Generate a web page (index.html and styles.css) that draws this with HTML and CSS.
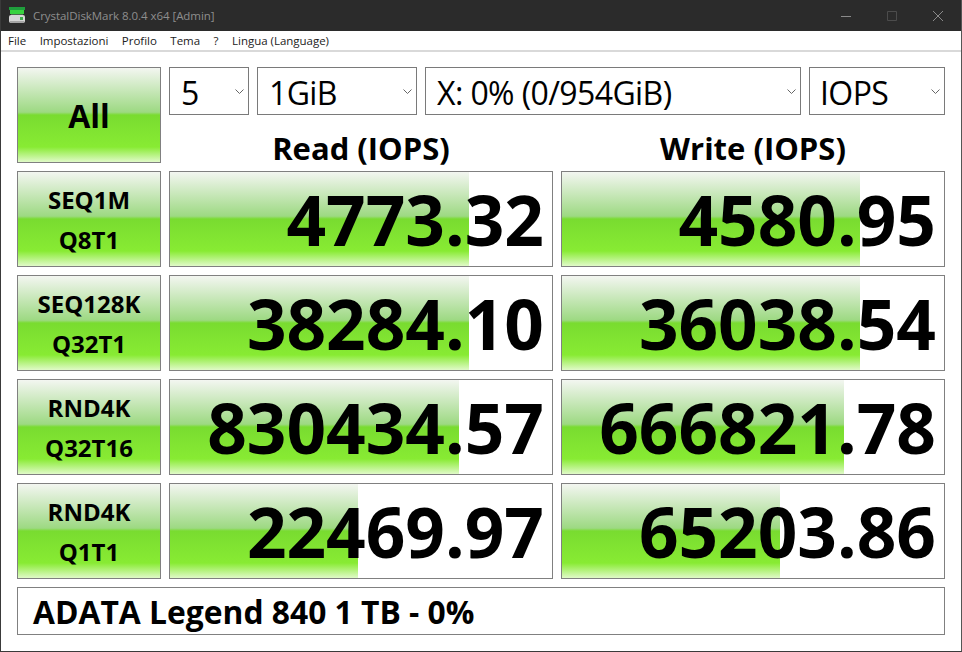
FILE: index.html
```html
<!DOCTYPE html>
<html lang="it">
<head>
<meta charset="utf-8">
<title>CrystalDiskMark</title>
<link rel="stylesheet" href="styles.css">
</head>
<body>
<div class="window">
  <header class="titlebar">
    <svg class="app-icon" width="16" height="17" viewBox="0 0 16 17">
      <rect x="0" y="0" width="16" height="3" fill="#1f9e3c"/>
      <rect x="1" y="3" width="14" height="4" fill="#38d23f"/>
      <rect x="2" y="7" width="12" height="1" fill="#4a6b4c"/>
      <rect x="0" y="8" width="16" height="8" rx="2" fill="#d6d6d6"/>
      <rect x="1" y="14" width="14" height="2" fill="#a4a4a4"/>
      <rect x="11" y="10" width="3" height="3" fill="#3fae4c"/>
    </svg>
    <span class="title">CrystalDiskMark 8.0.4 x64 [Admin]</span>
    <div class="win-controls">
      <svg class="ctl" width="46" height="30" viewBox="0 0 46 30"><path d="M18 15.5h10" stroke="#8a8a8a"/></svg>
      <svg class="ctl" width="46" height="30" viewBox="0 0 46 30"><path d="M18.5 10.5h9v9h-9z" fill="none" stroke="#4c4c4c"/></svg>
      <svg class="ctl" width="46" height="30" viewBox="0 0 46 30"><path d="M18 10l10 10M28 10L18 20" stroke="#8a8a8a"/></svg>
    </div>
  </header>
  <nav class="menu">
    <span>File</span><span>Impostazioni</span><span>Profilo</span><span>Tema</span><span>?</span><span>Lingua (Language)</span>
  </nav>
  <main class="board">
    <div class="btn btn-all">All</div>
    <div class="head">
      <div class="controls">
        <div class="sel sel-count">5<svg class="chev" width="9" height="5" viewBox="0 0 9 5"><path d="M.5.5l4 4 4-4" fill="none" stroke="#666"/></svg></div>
        <div class="sel sel-size">1GiB<svg class="chev" width="9" height="5" viewBox="0 0 9 5"><path d="M.5.5l4 4 4-4" fill="none" stroke="#666"/></svg></div>
        <div class="sel sel-drive">X: 0% (0/954GiB)<svg class="chev" width="9" height="5" viewBox="0 0 9 5"><path d="M.5.5l4 4 4-4" fill="none" stroke="#666"/></svg></div>
        <div class="sel sel-unit">IOPS<svg class="chev" width="9" height="5" viewBox="0 0 9 5"><path d="M.5.5l4 4 4-4" fill="none" stroke="#666"/></svg></div>
      </div>
      <div class="labels"><div>Read (IOPS)</div><div>Write (IOPS)</div></div>
    </div>

    <div class="btn btn-test"><span>SEQ1M</span><span>Q8T1</span></div>
    <div class="cell"><div class="bar" style="width:299px"></div><span class="val">4773.32</span></div>
    <div class="cell"><div class="bar" style="width:298px"></div><span class="val">4580.95</span></div>

    <div class="btn btn-test"><span>SEQ128K</span><span>Q32T1</span></div>
    <div class="cell"><div class="bar" style="width:299px"></div><span class="val">38284.10</span></div>
    <div class="cell"><div class="bar" style="width:298px"></div><span class="val">36038.54</span></div>

    <div class="btn btn-test"><span>RND4K</span><span>Q32T16</span></div>
    <div class="cell"><div class="bar" style="width:289px"></div><span class="val">830434.57</span></div>
    <div class="cell"><div class="bar" style="width:282px"></div><span class="val">666821.78</span></div>

    <div class="btn btn-test"><span>RND4K</span><span>Q1T1</span></div>
    <div class="cell"><div class="bar" style="width:188px"></div><span class="val">22469.97</span></div>
    <div class="cell"><div class="bar" style="width:218px"></div><span class="val">65203.86</span></div>

    <div class="footer">ADATA Legend 840 1 TB - 0%</div>
  </main>
</div>
</body>
</html>
```
FILE: styles.css
```css
* { box-sizing: border-box; }
html, body { margin: 0; padding: 0; }
body { width: 962px; height: 652px; overflow: hidden; background: #fff; font-family: "Open Sans", "Noto Sans", sans-serif; color: #000; }
.window { width: 962px; height: 652px; display: flex; flex-direction: column; border: 1px solid #3a3a3a; border-top: 0; border-right-color: #555; background: #fff; }
.titlebar { height: 31px; flex: none; background: #2b2b2b; display: flex; align-items: center; padding-left: 8px; color: #8e8e8e; font-size: 11.5px; letter-spacing: -0.05px; }
.app-icon { margin-right: 8px; }
.title { flex: 1; }
.win-controls { display: flex; }
.ctl { display: block; }
.menu { height: 21px; flex: none; background: #fff; border-bottom: 2px solid #d9d9d9; display: flex; align-items: center; gap: 13.5px; padding: 0 0 1px 7px; font-size: 11.5px; color: #222; letter-spacing: -0.02px; }
.board { display: grid; grid-template-columns: 144px 384px 384px; grid-template-rows: 96px 96px 96px 96px 96px 48px; gap: 8px; padding: 15px 0 0 16px; }
.btn { border: 1px solid #808080; background: linear-gradient(to bottom, #f3f6f1 0%, #9dd982 47%, #79dc30 50%, #88eb33 84%, #e0fac8 100%); display: flex; flex-direction: column; align-items: center; font-weight: 700; }
.btn-all { justify-content: center; font-size: 32px; }
.btn-test { font-size: 24px; line-height: 40px; padding-top: 8px; }
.head { grid-column: span 2; display: flex; flex-direction: column; }
.controls { display: flex; gap: 8px; height: 48px; }
.sel { border: 1px solid #7a7a7a; display: flex; align-items: center; justify-content: space-between; font-size: 32px; letter-spacing: -0.6px; padding: 3px 4px 0 11px; background: #fff; }
.sel-count { width: 80px; }
.sel-size { width: 160px; }
.sel-drive { width: 376px; }
.sel-unit { width: 136px; padding-left: 10px; }
.chev { flex: none; margin-top: -3px; }
.labels { display: grid; grid-template-columns: 384px 384px; gap: 8px; flex: 1; text-align: center; font-size: 31px; font-weight: 700; line-height: 66px; }
.cell { position: relative; border: 1px solid #808080; display: flex; align-items: center; justify-content: flex-end; padding: 2px 8px 0 0; overflow: hidden; }
.bar { position: absolute; left: 0; top: 0; bottom: 0; background: linear-gradient(to bottom, #f3f6f1 0%, #9dd982 47%, #79dc30 50%, #88eb33 84%, #e0fac8 100%); }
.val { position: relative; font-size: 69.3px; font-weight: 700; line-height: 1; }
.footer { grid-column: span 3; border: 1px solid #808080; display: flex; align-items: center; padding-left: 15px; font-size: 31.8px; font-weight: 700; }
```
